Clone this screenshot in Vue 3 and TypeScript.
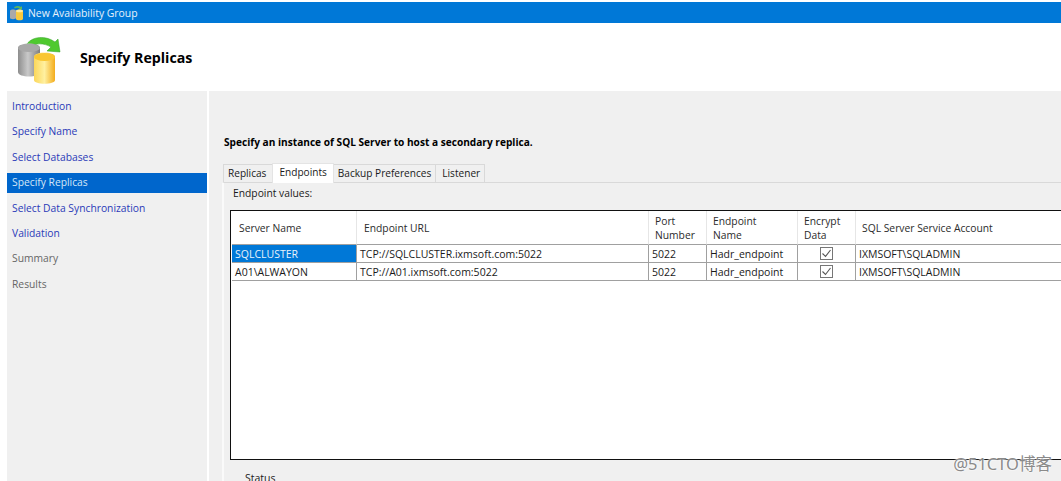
<script setup lang="ts">
const steps = [
  { label: 'Introduction', state: 'link' },
  { label: 'Specify Name', state: 'link' },
  { label: 'Select Databases', state: 'link' },
  { label: 'Specify Replicas', state: 'active' },
  { label: 'Select Data Synchronization', state: 'link' },
  { label: 'Validation', state: 'link' },
  { label: 'Summary', state: 'off' },
  { label: 'Results', state: 'off' },
];

const tabs = ['Replicas', 'Endpoints', 'Backup Preferences', 'Listener'];

const rows = [
  { server: 'SQLCLUSTER', url: 'TCP://SQLCLUSTER.ixmsoft.com:5022' },
  { server: 'A01\\ALWAYON', url: 'TCP://A01.ixmsoft.com:5022' },
];
</script>

<template>
  <div class="page">
    <div class="titlebar">
      <svg class="title-icon" viewBox="0 0 15 16" width="15" height="16">
        <path d="M5 2.500C7 0.500 10 0.500 12 2l1-1v3.500H9.500l1-1C9 2.500 7 2.500 6 3.500z" fill="#5cb85c" />
        <path d="M1 6c0-2 6-2 6 0v7c0 1.500-6 1.500-6 0z" fill="#a9a9a9" />
        <path d="M7 6c0-2 7-2 7 0v8c0 1.800-7 1.800-7 0z" fill="#f7c93e" />
        <ellipse cx="10.500" cy="6" rx="3.500" ry="1.300" fill="#fdeaa0" />
      </svg>
      <span>New Availability Group</span>
    </div>

    <div class="header">
      <svg class="header-icon" viewBox="0 0 54 54" width="54" height="54">
        <defs>
          <linearGradient id="grayCyl" x1="0" x2="1" y1="0" y2="0">
            <stop offset="0" stop-color="#8d8d8d" />
            <stop offset="0.45" stop-color="#c9c9c9" />
            <stop offset="1" stop-color="#7d7d7d" />
          </linearGradient>
          <linearGradient id="goldCyl" x1="0" x2="1" y1="0" y2="0">
            <stop offset="0" stop-color="#fbd75a" />
            <stop offset="0.5" stop-color="#fff0a0" />
            <stop offset="1" stop-color="#f3ac1c" />
          </linearGradient>
        </defs>
        <path d="M8 17C11 6 27 3 38 11l3-3 2 13-13-1 4-4C27 12 17 11 14 18z" fill="#4fc92f" stroke="#2f9e22" stroke-width="0.500" />
        <path d="M1 17c0-6 22-6 22 0v24c0 6-22 6-22 0z" fill="url(#grayCyl)" />
        <ellipse cx="12" cy="17" rx="11" ry="4" fill="#a8a8a8" />
        <path d="M17 26c0-6 21-6 21 0v23c0 5-21 5-21 0z" fill="url(#goldCyl)" />
        <ellipse cx="27.500" cy="26" rx="10.500" ry="4" fill="#f9c630" />
      </svg>
      <span class="header-title">Specify Replicas</span>
    </div>

    <div class="body">
      <nav class="sidebar">
        <div v-for="step in steps" :key="step.label" class="step" :class="step.state">{{ step.label }}</div>
      </nav>

      <main class="content">
        <div class="instruction">Specify an instance of SQL Server to host a secondary replica.</div>

        <div class="tabs">
          <div v-for="tab in tabs" :key="tab" class="tab" :class="{ selected: tab === 'Endpoints' }">{{ tab }}</div>
        </div>

        <div class="panel">
          <div class="panel-label">Endpoint values:</div>
          <div class="grid-box">
            <div class="grid-row head">
              <div class="cell pad">Server Name</div>
              <div class="cell pad">Endpoint URL</div>
              <div class="cell pad-sm">Port<br />Number</div>
              <div class="cell pad-sm">Endpoint<br />Name</div>
              <div class="cell pad-sm">Encrypt<br />Data</div>
              <div class="cell pad-sm">SQL Server Service Account</div>
            </div>
            <div v-for="(row, i) in rows" :key="row.server" class="grid-row data">
              <div class="cell" :class="{ picked: i === 0 }">{{ row.server }}</div>
              <div class="cell">{{ row.url }}</div>
              <div class="cell">5022</div>
              <div class="cell">Hadr_endpoint</div>
              <div class="cell center">
                <svg viewBox="0 0 13 13" width="13" height="13">
                  <rect x="0.500" y="0.500" width="12" height="12" fill="#fff" stroke="#767676" />
                  <path d="M2.500 6.500l3 3 5-6.500" fill="none" stroke="#555" stroke-width="1.100" />
                </svg>
              </div>
              <div class="cell">IXMSOFT\SQLADMIN</div>
            </div>
          </div>
          <div class="status">Status</div>
        </div>
      </main>
    </div>

    <div class="watermark">@51CTO博客</div>
  </div>
</template>

<style scoped>
.page {
  position: relative;
  width: 1061px;
  height: 481px;
  box-sizing: border-box;
  padding: 2px 0 0 7px;
  overflow: hidden;
  background: #fff;
  font-family: "Open Sans", "Noto Sans", sans-serif;
  font-size: 10.500px;
  color: #1a1a1a;
  display: flex;
  flex-direction: column;
}

.titlebar {
  height: 21px;
  flex: none;
  background: #0078d7;
  color: #e8f2fb;
  font-size: 10.400px;
  display: flex;
  align-items: center;
  gap: 4px;
  padding-left: 2px;
}

.title-icon {
  flex: none;
}

.header {
  height: 68px;
  flex: none;
  display: flex;
  align-items: center;
  padding-left: 10px;
  background: #fff;
}

.header-icon {
  flex: none;
  margin-top: 1px;
}

.header-title {
  margin-left: 9px;
  font-size: 14.200px;
  font-weight: 700;
  color: #000;
}

.body {
  flex: 1;
  display: flex;
  gap: 2px;
  min-height: 0;
}

.sidebar {
  width: 200px;
  flex: none;
  background: #f0f0f0;
  padding-top: 6px;
  font-size: 10.300px;
  display: flex;
  flex-direction: column;
  gap: 5.400px;
}

.step {
  height: 20px;
  line-height: 19px;
  padding-left: 5px;
}

.step.link {
  color: #2a3ab8;
}

.step.active {
  background: #0066cc;
  color: #d5e6f7;
}

.step.off {
  color: #666;
}

.content {
  flex: 1;
  min-width: 0;
  background: #f0f0f0;
  padding: 44px 0 0 13px;
  display: flex;
  flex-direction: column;
}

.instruction {
  font-weight: 700;
  font-size: 10.150px;
  color: #000;
  height: 15px;
  line-height: 15px;
  padding-left: 2px;
}

.tabs {
  display: flex;
  align-items: flex-end;
  height: 19px;
  margin-top: 13px;
  padding-left: 1px;
  font-size: 10.100px;
}

.tab {
  height: 18px;
  line-height: 17px;
  padding: 0 4px;
  background: #f0f0f0;
  border: 1px solid #d9d9d9;
  border-bottom: none;
  margin-left: -1px;
  box-sizing: border-box;
}

.tab:first-child {
  margin-left: 0;
  padding-right: 6px;
}

.tab:last-child {
  padding-left: 6px;
}

.tab.selected {
  height: 20px;
  padding: 0 6px;
  background: #fff;
  border-color: #e4e4e4;
  position: relative;
  z-index: 1;
  margin-bottom: -1px;
  line-height: 17px;
}

.panel {
  flex: 1;
  border-top: 1px solid #d9d9d9;
  border-left: 2px solid #fafafa;
  padding-left: 6px;
}

.panel-label {
  height: 15px;
  line-height: 15px;
  margin-top: 3px;
  padding-left: 3px;
  font-size: 10.300px;
}

.grid-box {
  height: 250px;
  margin-top: 9px;
  box-sizing: border-box;
  background: #fff;
  border: 1px solid #111;
  border-right: none;
  padding-left: 1px;
}

.grid-row {
  display: grid;
  grid-template-columns: 125px 292px 58px 91px 58px 1fr;
}

.cell {
  display: flex;
  align-items: center;
  box-sizing: border-box;
  padding-left: 3px;
  border-right: 1px solid #a0a0a0;
  border-bottom: 1px solid #a0a0a0;
  white-space: nowrap;
}

.cell:last-child {
  border-right: none;
}

.grid-row.head {
  height: 34px;
  color: #2b2b2b;
  font-size: 10.300px;
}

.grid-row.head .cell {
  border-right-color: #e6e6e6;
  border-bottom-color: #a0a0a0;
  line-height: 14px;
}

.cell.pad {
  padding-left: 7px;
}

.cell.pad-sm {
  padding-left: 6px;
  display: block;
  padding-top: 3px;
}

.grid-row.head .cell:last-child {
  display: flex;
  padding-top: 0;
}

.grid-row.data {
  height: 18px;
}

.cell.picked {
  background: #0078d7;
  color: #e8f2fb;
}

.cell.center {
  justify-content: center;
  padding-left: 0;
}

.status {
  margin: 11px 0 0 15px;
  line-height: 15px;
}

.watermark {
  position: absolute;
  right: 9px;
  bottom: 8px;
  font-family: "Noto Sans", "Noto Sans CJK SC", sans-serif;
  font-size: 16.500px;
  line-height: 18px;
  color: #8a8a8a;
  text-shadow: 0 0 2px #fff, 0 0 2px #fff;
}
</style>
